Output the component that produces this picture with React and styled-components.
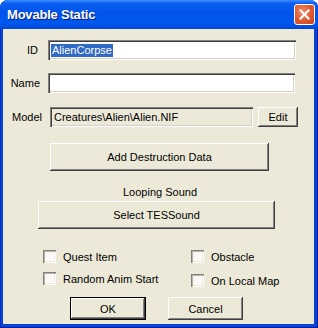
import React from 'react'
import styled, { createGlobalStyle } from 'styled-components'

const GlobalStyle = createGlobalStyle`
  body {
    margin: 0;
    background: #ffffff;
    font-family: "Liberation Sans", Arial, sans-serif;
    font-size: 11px;
    color: #000000;
  }
`

const Window = styled.div`
  width: 318px;
  height: 328px;
  display: flex;
  flex-direction: column;
  border-radius: 8px 8px 0 0;
  overflow: hidden;
  background: #0842d6;
  box-shadow: inset -1px -1px #001e9c, inset 1px 0 #0831c4;
`

const TitleBar = styled.div`
  height: 29px;
  flex: none;
  display: flex;
  align-items: center;
  justify-content: space-between;
  padding: 0 3px 0 7px;
  background: linear-gradient(
    #3c8eff 0%,
    #0a5ef0 12%,
    #0053e8 45%,
    #0058ee 80%,
    #0046d4 100%
  );
`

const Title = styled.span`
  color: #ffffff;
  font-weight: bold;
  font-size: 13px;
  text-shadow: 1px 1px #0a1f87;
  letter-spacing: -0.2px;
`

const CloseButton = styled.button`
  width: 21px;
  height: 21px;
  padding: 0;
  border: 1px solid #ffffff;
  border-radius: 3px;
  background: radial-gradient(circle at 40% 35%, #f08a6a 0%, #e0582e 55%, #c8411b 100%);
  display: flex;
  align-items: center;
  justify-content: center;
`

const Client = styled.div`
  flex: 1;
  margin: 0 4px 4px 3px;
  background: #ece9d8;
  display: flex;
  flex-direction: column;
  padding-top: 11px;
`

const Row = styled.div`
  display: flex;
  align-items: center;
  height: 20px;
  margin-top: ${p => p.$mt || 0}px;
`

const Label = styled.span`
  width: ${p => p.$w}px;
  margin-right: ${p => p.$gap}px;
  text-align: right;
  flex: none;
`

const Field = styled.div`
  width: ${p => p.$w}px;
  height: 20px;
  box-sizing: border-box;
  background: ${p => (p.$readOnly ? '#ece9d8' : '#ffffff')};
  box-shadow: inset 1px 1px #808080, inset 2px 2px #404040,
    inset -1px -1px #ffffff, inset -2px -2px #d4d0c8;
  display: flex;
  align-items: center;
  padding-left: ${p => (p.$readOnly ? 4 : 3)}px;
  white-space: nowrap;
  overflow: hidden;
`

const Selected = styled.span`
  background: #316ac5;
  color: #ffffff;
  line-height: 13px;
  padding: 0 1px;
`

const Button = styled.button`
  font: inherit;
  color: #000000;
  width: ${p => p.$w}px;
  height: ${p => p.$h}px;
  margin-left: ${p => p.$ml || 0}px;
  margin-top: ${p => p.$mt || 0}px;
  flex: none;
  padding: 0;
  background: #ece9d8;
  border: ${p => (p.$default ? '1px solid #000000' : 'none')};
  box-shadow: inset -1px -1px #404040, inset 1px 1px #ffffff,
    inset -2px -2px #808080, inset 2px 2px #ece9d8;
`

const Caption = styled.div`
  text-align: center;
  line-height: 13px;
  margin-top: 15px;
  padding-left: 3px;
`

const Checks = styled.div`
  display: grid;
  grid-template-columns: 148px auto;
  row-gap: 9px;
  padding-left: 40px;
  margin-top: 21px;
`

const CheckItem = styled.label`
  display: flex;
  align-items: center;
  gap: 7px;
  height: 13px;
  margin-top: ${p => p.$dy || 0}px;
`

const Box = styled.span`
  width: 13px;
  height: 13px;
  flex: none;
  box-sizing: border-box;
  background: linear-gradient(135deg, #f4f3ee, #ffffff);
  box-shadow: inset 1px 1px #808080, inset 2px 2px #b8b5a6,
    inset -1px -1px #ffffff, inset -2px -2px #ece9d8;
`

const Footer = styled.div`
  display: flex;
  gap: 22px;
  padding-left: 67px;
  margin-top: 10px;
`

const Check = ({ children, dy }) => (
  <CheckItem $dy={dy}>
    <Box />
    {children}
  </CheckItem>
)

const App = () => {
  return (
    <>
      <GlobalStyle />
      <Window>
        <TitleBar>
          <Title>Movable Static</Title>
          <CloseButton>
            <svg width="11" height="11" viewBox="0 0 11 11">
              <path d="M1.5 1.5 L9.5 9.5 M9.5 1.5 L1.5 9.5" stroke="#ffffff" strokeWidth="2.2" strokeLinecap="square" />
            </svg>
          </CloseButton>
        </TitleBar>
        <Client>
          <Row>
            <Label $w={35} $gap={10}>ID</Label>
            <Field $w={248}>
              <Selected>AlienCorpse</Selected>
            </Field>
          </Row>
          <Row $mt={13}>
            <Label $w={37} $gap={8}>Name</Label>
            <Field $w={247} />
          </Row>
          <Row $mt={14}>
            <Label $w={39} $gap={8}>Model</Label>
            <Field $w={203} $readOnly>Creatures\Alien\Alien.NIF</Field>
            <Button $w={40} $h={20} $ml={5}>Edit</Button>
          </Row>
          <Button $w={219} $h={28} $ml={47} $mt={16}>Add Destruction Data</Button>
          <Caption>Looping Sound</Caption>
          <Button $w={237} $h={28} $ml={35} $mt={2}>Select TESSound</Button>
          <Checks>
            <Check>Quest Item</Check>
            <Check>Obstacle</Check>
            <Check>Random Anim Start</Check>
            <Check dy={2}>On Local Map</Check>
          </Checks>
          <Footer>
            <Button $w={76} $h={23} $default>OK</Button>
            <Button $w={75} $h={23}>Cancel</Button>
          </Footer>
        </Client>
      </Window>
    </>
  )
}

export default App
